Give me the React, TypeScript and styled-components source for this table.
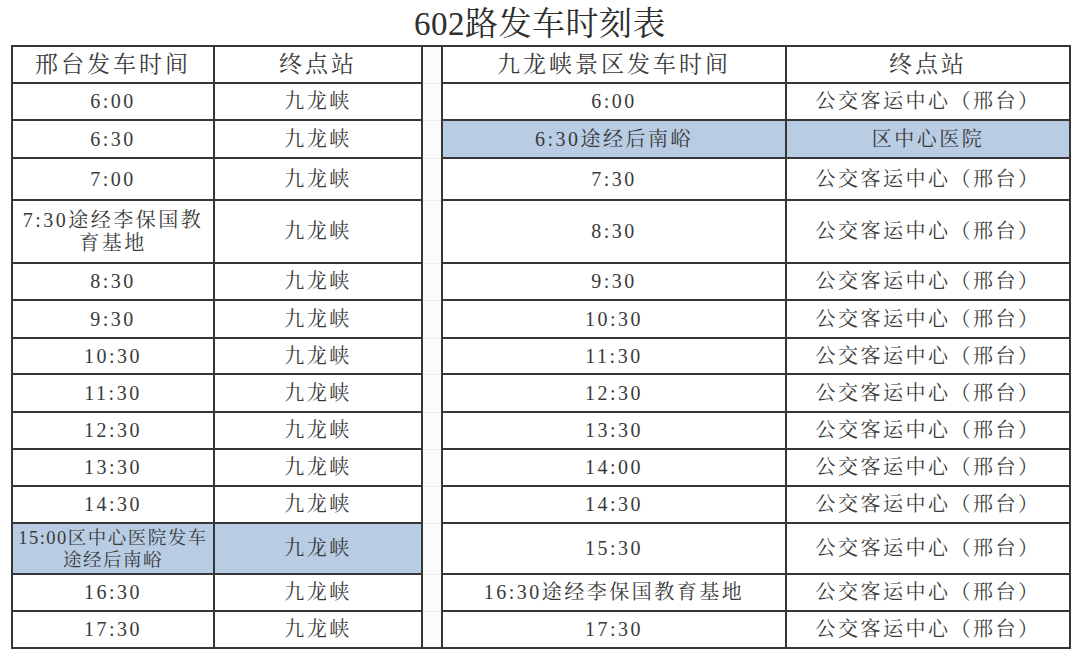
import React from 'react';
import styled, { createGlobalStyle } from 'styled-components';

const GlobalStyle = createGlobalStyle`
  html, body {
    margin: 0;
    padding: 0;
    background: #ffffff;
  }
  body {
    font-family: "Liberation Serif", "Noto Serif CJK SC", "Noto Sans CJK SC", serif;
    color: #3a3a3a;
  }
`;

const Page = styled.div`
  width: 1080px;
  height: 659px;
  overflow: hidden;
  background: #fff;
`;

const Title = styled.h1`
  margin: 0;
  height: 45px;
  padding-top: 4px;
  box-sizing: border-box;
  text-align: center;
  font-weight: normal;
  font-size: 33px;
  line-height: 40px;
  letter-spacing: 0.5px;
  color: #2e2e2e;
`;

const Table = styled.table`
  margin-left: 11px;
  width: 1058px;
  border-collapse: collapse;
  table-layout: fixed;
`;

const Col = styled.col<{ $w: number }>`
  width: ${p => p.$w}px;
`;

const Row = styled.tr<{ $h: number }>`
  height: ${p => p.$h}px;
`;

const Cell = styled.td<{ $blue?: boolean; $head?: boolean; $small?: boolean }>`
  border: 2px solid #363636;
  padding: 0;
  text-align: center;
  vertical-align: middle;
  background: ${p => (p.$blue ? '#b8cce4' : '#ffffff')};
  font-size: ${p => (p.$head ? '23px' : p.$small ? '18.5px' : '20px')};
  letter-spacing: ${p => (p.$head ? '3px' : p.$small ? '1.5px' : '2.5px')};
  line-height: ${p => (p.$small ? '22px' : '23px')};
  white-space: nowrap;
`;

const GapCell = styled.td<{ $first?: boolean; $last?: boolean }>`
  padding: 0;
  background: #fbfbfb;
  border-left: 2px solid #363636;
  border-right: 2px solid #363636;
  border-top: ${p => (p.$first ? '2px solid #363636' : '1px solid #ececec')};
  border-bottom: ${p => (p.$last ? '2px solid #363636' : '1px solid #ececec')};
`;

type Entry = {
  h: number;
  left: [React.ReactNode, React.ReactNode];
  right: [React.ReactNode, React.ReactNode];
  leftBlue?: boolean;
  rightBlue?: boolean;
  small?: boolean;
};

const terminal = '公交客运中心（邢台）';
const jlx = '九龙峡';

const rows: Entry[] = [
  { h: 37, left: ['6:00', jlx], right: ['6:00', terminal] },
  { h: 38, left: ['6:30', jlx], right: ['6:30途经后南峪', '区中心医院'], rightBlue: true },
  { h: 42, left: ['7:00', jlx], right: ['7:30', terminal] },
  {
    h: 63,
    left: [
      <>
        7:30途经李保国教
        <br />
        育基地
      </>,
      jlx,
    ],
    right: ['8:30', terminal],
  },
  { h: 37, left: ['8:30', jlx], right: ['9:30', terminal] },
  { h: 38, left: ['9:30', jlx], right: ['10:30', terminal] },
  { h: 36, left: ['10:30', jlx], right: ['11:30', terminal] },
  { h: 38, left: ['11:30', jlx], right: ['12:30', terminal] },
  { h: 37, left: ['12:30', jlx], right: ['13:30', terminal] },
  { h: 37, left: ['13:30', jlx], right: ['14:00', terminal] },
  { h: 37, left: ['14:30', jlx], right: ['14:30', terminal] },
  {
    h: 51,
    left: [
      <>
        15:00区中心医院发车
        <br />
        途经后南峪
      </>,
      jlx,
    ],
    right: ['15:30', terminal],
    leftBlue: true,
    small: true,
  },
  { h: 37, left: ['16:30', jlx], right: ['16:30途经李保国教育基地', terminal] },
  { h: 37, left: ['17:30', jlx], right: ['17:30', terminal] },
];

const App: React.FC = () => {
  return (
    <Page>
      <GlobalStyle />
      <Title>602路发车时刻表</Title>
      <Table>
        <colgroup>
          <Col $w={202} />
          <Col $w={208} />
          <Col $w={20} />
          <Col $w={344} />
          <Col $w={284} />
        </colgroup>
        <tbody>
          <Row $h={37}>
            <Cell $head>邢台发车时间</Cell>
            <Cell $head>终点站</Cell>
            <GapCell $first />
            <Cell $head>九龙峡景区发车时间</Cell>
            <Cell $head>终点站</Cell>
          </Row>
          {rows.map((r, i) => (
            <Row key={i} $h={r.h}>
              <Cell $blue={r.leftBlue} $small={r.small}>
                {r.left[0]}
              </Cell>
              <Cell $blue={r.leftBlue}>{r.left[1]}</Cell>
              <GapCell $last={i === rows.length - 1} />
              <Cell $blue={r.rightBlue}>{r.right[0]}</Cell>
              <Cell $blue={r.rightBlue}>{r.right[1]}</Cell>
            </Row>
          ))}
        </tbody>
      </Table>
    </Page>
  );
};

export default App;
